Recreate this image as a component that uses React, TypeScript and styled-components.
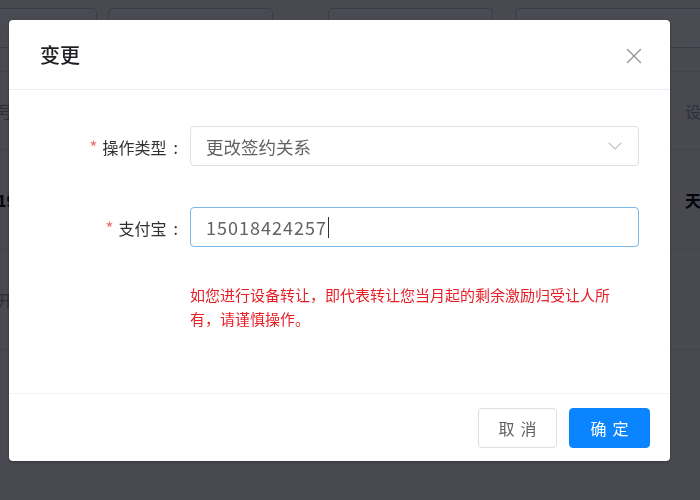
import React from "react";
import styled, { createGlobalStyle } from "styled-components";

const GlobalStyle = createGlobalStyle`
  html, body { margin: 0; padding: 0; }
  body {
    width: 700px;
    height: 500px;
    overflow: hidden;
    font-family: "Noto Sans CJK SC", "Noto Sans", sans-serif;
    background: #f4f4f8;
  }
  * { box-sizing: border-box; }
`;

/* ---------- background page ---------- */
const Page = styled.div`
  width: 700px;
  height: 500px;
  overflow: hidden;
  padding-top: 8px;
  background: #f4f4f8;
`;

const FilterBar = styled.div`
  display: flex;
  height: 40px;
  margin-left: -20px;
`;

const FilterBox = styled.div<{ $w: number; $gap: number }>`
  width: ${(p) => p.$w}px;
  margin-left: ${(p) => p.$gap}px;
  flex: none;
  border: 1px solid #c9c9d4;
  border-radius: 4px;
  background: #f7f7fa;
  color: #b8b8c2;
  font-size: 15px;
  display: flex;
  align-items: center;
  justify-content: flex-end;
  padding-right: 12px;
`;

const TableRow = styled.div<{ $h: number; $bold?: boolean }>`
  height: ${(p) => p.$h}px;
  border-bottom: 1px solid #dfdfe6;
  display: flex;
  align-items: center;
  justify-content: space-between;
  margin-left: -3px;
  width: 720px;
  font-size: 16px;
  font-weight: ${(p) => (p.$bold ? 700 : 400)};
  color: ${(p) => (p.$bold ? "#111" : "#9a9aa5")};
`;

const Cell = styled.span`
  white-space: nowrap;
`;

const TopSpacer = styled.div`
  height: 24px;
  border-bottom: 1px solid #dfdfe6;
`;

/* ---------- overlay & dialog ---------- */
const Overlay = styled.div`
  position: fixed;
  inset: 0;
  background: rgba(0, 0, 10, 0.7);
  display: flex;
  align-items: flex-start;
  justify-content: flex-start;
  padding: 20px 0 0 9px;
`;

const Dialog = styled.div`
  width: 661px;
  height: 441px;
  background: #fff;
  border-radius: 4px;
  box-shadow: 0 1px 3px rgba(0, 0, 0, 0.3);
  display: flex;
  flex-direction: column;
`;

const Header = styled.div`
  height: 70px;
  flex: none;
  display: flex;
  align-items: center;
  justify-content: space-between;
  padding: 0 28px 0 31px;
  border-bottom: 1px solid #ebeef5;
`;

const Title = styled.div`
  font-size: 20px;
  font-weight: 500;
  color: #1f2023;
  line-height: 1;
  margin-top: 1px;
`;

const CloseBtn = styled.button`
  border: 0;
  background: none;
  padding: 0;
  width: 16px;
  height: 16px;
  display: flex;
  cursor: pointer;
  margin-top: 2px;
`;

const Body = styled.div`
  flex: 1;
  padding: 36px 31px 0 31px;
  display: flex;
  flex-direction: column;
`;

const FormRow = styled.div<{ $mt?: number }>`
  display: flex;
  align-items: center;
  height: 40px;
  margin-top: ${(p) => p.$mt ?? 0}px;
`;

const Label = styled.label`
  width: 150px;
  flex: none;
  text-align: right;
  padding-right: 12px;
  font-size: 16px;
  color: #303133;
  white-space: nowrap;
`;

const Star = styled.span`
  color: #f56c6c;
  margin-right: 5px;
  font-size: 17px;
`;

const Colon = styled.span`
  margin-left: 7px;
`;

const Field = styled.div<{ $focus?: boolean }>`
  flex: 1;
  height: 40px;
  border: 1px solid ${(p) => (p.$focus ? "#7cb7ea" : "#dcdfe6")};
  border-radius: 4px;
  display: flex;
  align-items: center;
  padding: 0 16px 0 15px;
  font-size: 17.5px;
  color: #606266;
  background: #fff;
`;

const FieldText = styled.span<{ $digits?: boolean }>`
  flex: ${(p) => (p.$digits ? "none" : 1)};
  font-size: ${(p) => (p.$digits ? "18px" : "17.5px")};
  letter-spacing: ${(p) => (p.$digits ? "1px" : "0")};
  white-space: nowrap;
`;

const Caret = styled.span`
  width: 1px;
  height: 21px;
  background: #303133;
  margin-left: 1px;
`;

const Tip = styled.div`
  margin: 36px 0 0 150px;
  width: 440px;
  font-size: 15px;
  line-height: 24px;
  color: #e61f27;
`;

const Footer = styled.div`
  height: 68px;
  flex: none;
  border-top: 1px solid #f2f2f4;
  display: flex;
  align-items: flex-start;
  justify-content: flex-end;
  padding: 14px 20px 0 0;
  gap: 12px;
`;

const Button = styled.button<{ $primary?: boolean }>`
  height: 40px;
  width: ${(p) => (p.$primary ? 81 : 79)}px;
  border-radius: 4px;
  border: 1px solid ${(p) => (p.$primary ? "#0a84ff" : "#dcdfe6")};
  background: ${(p) => (p.$primary ? "#0a84ff" : "#fff")};
  color: ${(p) => (p.$primary ? "#fff" : "#606266")};
  font-family: "Noto Sans CJK SC", "Noto Sans", sans-serif;
  font-size: 16px;
  letter-spacing: 6px;
  padding: 0 0 0 6px;
  cursor: pointer;
`;

const CloseIcon = () => (
  <svg width="16" height="16" viewBox="0 0 16 16" fill="none">
    <path d="M1.5 1.5L14.5 14.5M14.5 1.5L1.5 14.5" stroke="#909399" strokeWidth="1.3" strokeLinecap="round" />
  </svg>
);

const Chevron = () => (
  <svg width="14" height="8" viewBox="0 0 14 8" fill="none">
    <path d="M1 1L7 7L13 1" stroke="#c0c4cc" strokeWidth="1.1" strokeLinecap="round" strokeLinejoin="round" />
  </svg>
);

export default function App() {
  return (
    <>
      <GlobalStyle />
      <Page>
        <FilterBar>
          <FilterBox $w={117} $gap={0}>日期</FilterBox>
          <FilterBox $w={165} $gap={11} />
          <FilterBox $w={165} $gap={55} />
          <FilterBox $w={190} $gap={22} />
        </FilterBar>
        <TopSpacer />
        <TableRow $h={78}>
          <Cell>号</Cell>
          <Cell>设备</Cell>
        </TableRow>
        <TableRow $h={100} $bold>
          <Cell>19</Cell>
          <Cell>天天</Cell>
        </TableRow>
        <TableRow $h={100}>
          <Cell>开</Cell>
          <Cell />
        </TableRow>
      </Page>
      <Overlay>
        <Dialog>
          <Header>
            <Title>变更</Title>
            <CloseBtn aria-label="关闭">
              <CloseIcon />
            </CloseBtn>
          </Header>
          <Body>
            <FormRow>
              <Label>
                <Star>*</Star>操作类型<Colon>:</Colon>
              </Label>
              <Field>
                <FieldText>更改签约关系</FieldText>
                <Chevron />
              </Field>
            </FormRow>
            <FormRow $mt={41}>
              <Label>
                <Star>*</Star>支付宝<Colon>:</Colon>
              </Label>
              <Field $focus>
                <FieldText $digits>15018424257</FieldText>
                <Caret />
              </Field>
            </FormRow>
            <Tip>如您进行设备转让，即代表转让您当月起的剩余激励归受让人所有，请谨慎操作。</Tip>
          </Body>
          <Footer>
            <Button>取消</Button>
            <Button $primary>确定</Button>
          </Footer>
        </Dialog>
      </Overlay>
    </>
  );
}
